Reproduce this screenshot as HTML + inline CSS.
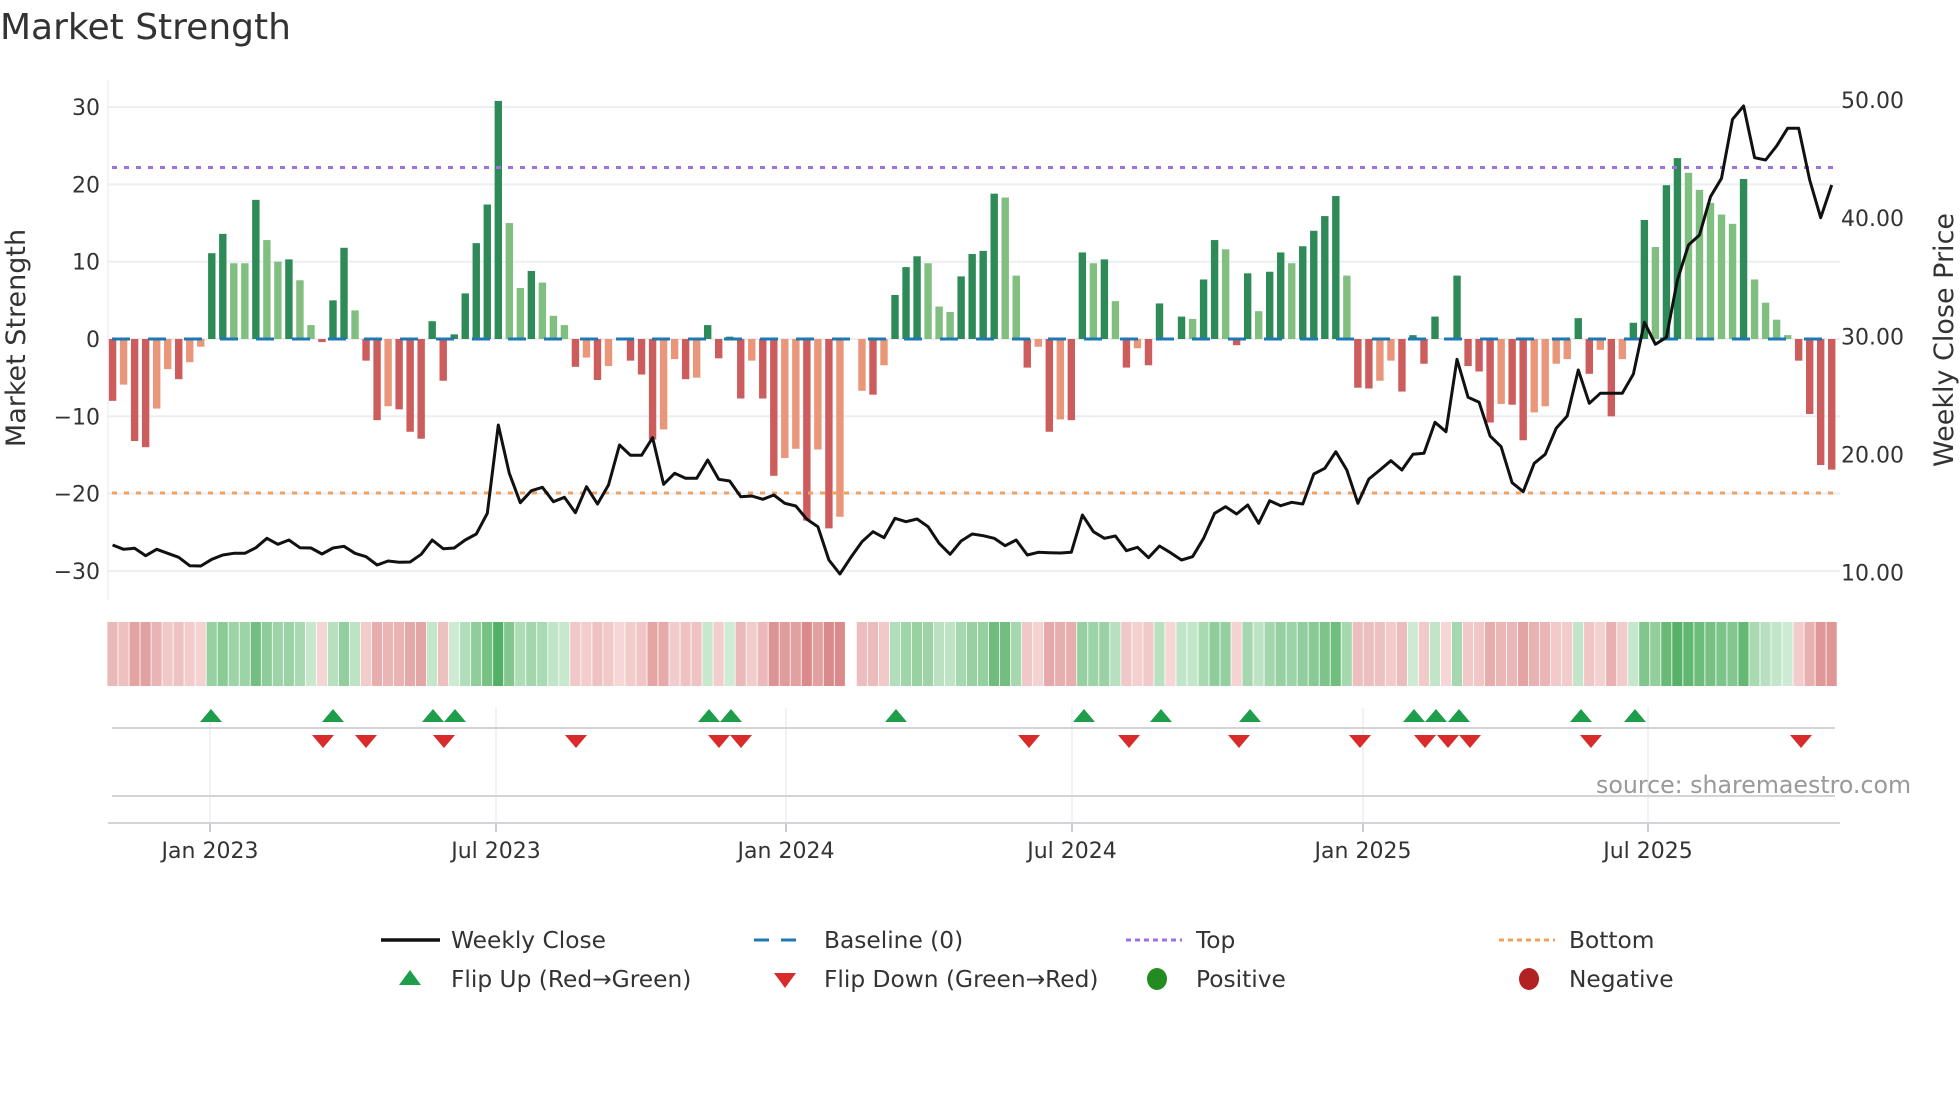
<!DOCTYPE html>
<html><head><meta charset="utf-8">
<style>
html,body{margin:0;padding:0;background:#fff;}
body{width:1960px;height:1102px;overflow:hidden;font-family:"DejaVu Sans","Liberation Sans",sans-serif;}
svg{display:block}
text{font-family:"DejaVu Sans","Liberation Sans",sans-serif;}
</style></head>
<body>
<svg id="s" width="1960" height="1102" viewBox="0 0 1960 1102" xmlns="http://www.w3.org/2000/svg">
<rect width="1960" height="1102" fill="#fff"/>
<text x="0" y="39" font-size="36" fill="#333">Market Strength</text>
<g id="grid"></g>
<g id="heat"></g>
<g id="bars"></g>
<g id="fl"></g>
<text x="1596" y="793" font-size="23.7" fill="#999">source: sharemaestro.com</text>
<text transform="translate(25,338) rotate(-90)" text-anchor="middle" font-size="27" fill="#333">Market Strength</text>
<text transform="translate(1953,340) rotate(-90)" text-anchor="middle" font-size="27" fill="#333">Weekly Close Price</text>
<g font-size="23.3" fill="#333">
<line x1="381" y1="940" x2="440" y2="940" stroke="#111" stroke-width="3.5"/>
<text x="451" y="948">Weekly Close</text>
<line x1="754" y1="940" x2="806" y2="940" stroke="#1f77b4" stroke-width="3" stroke-dasharray="15,12"/>
<text x="824" y="948">Baseline (0)</text>
<line x1="1126" y1="940" x2="1182" y2="940" stroke="#a070e0" stroke-width="3" stroke-dasharray="5,4"/>
<text x="1196" y="948">Top</text>
<line x1="1499" y1="940" x2="1555" y2="940" stroke="#f0a060" stroke-width="3" stroke-dasharray="5,4"/>
<text x="1569" y="948">Bottom</text>
<polygon points="410,970 399,985 421,985" fill="#1e9e4a"/>
<text x="451" y="987">Flip Up (Red→Green)</text>
<polygon points="774,973 796,973 785,988" fill="#d92b2b"/>
<text x="824" y="987">Flip Down (Green→Red)</text>
<ellipse cx="1157" cy="979" rx="10" ry="11" fill="#228b22"/>
<text x="1196" y="987">Positive</text>
<ellipse cx="1529" cy="979" rx="10" ry="11" fill="#b22222"/>
<text x="1569" y="987">Negative</text>
</g>
</svg>
<script>
var NS="http://www.w3.org/2000/svg";
function el(p,t,a,txt){var e=document.createElementNS(NS,t);for(var k in a)e.setAttribute(k,a[k]);if(txt!=null)e.textContent=txt;p.appendChild(e);return e;}
var V="-8d -5.9l -13.2d -14d -9l -3.9l -5.2d -3l -1l 11.1d 13.6d 9.8l 9.8l 18d 12.8l 10l 10.3d 7.6l 1.8l -0.4d 5d 11.8d 3.7l -2.8d -10.5d -8.7l -9.1d -12d -12.9d 2.3d -5.4d 0.6d 5.9d 12.4d 17.4d 30.8d 15l 6.6l 8.8d 7.3l 3l 1.8l -3.6d -2.4l -5.3d -3.5l 0d -2.8d -4.6d -13d -11.7l -2.6l -5.2d -5l "+
"1.8d -2.5d 0.3d -7.7d -2.8l -7.7d -17.7d -15.4l -14.2l -23.5d -14.3l -24.5d -23l 0d -6.7l -7.2d -3.4l 5.7d 9.3d 10.7d 9.8l 4.2l 3.5l 8.1d 11d 11.4d 18.8d 18.3l 8.2l -3.7d -1l -12d -10.4l -10.5d 11.2d 9.8l 10.3d 4.9l -3.7d -1.2l -3.4d 4.6d 0d 2.9d 2.6l 7.7d 12.8d 11.6l -0.8d 8.5d "+
"3.6l 8.7d 11.2d 9.8l 12d 14d 15.9d 18.5d 8.2l -6.3d -6.4d -5.4l -2.8l -6.8d 0.5d -3.2d 2.9d 0d 8.2d -3.5d -4.2d -10.8d -8.4l -8.5d -13.1d -9.5l -8.7l -3.2l -2.6l 2.7d -4.5d -1.4l -10d -2.6l 2.1d 15.4d 11.9l 19.9d 23.4d 21.5l 19.3l 17.6l 16.1l 14.9l 20.7d 7.7l 4.7l 2.5l 0.5l -2.8d -9.7d -16.3d -16.9d";
var P=[1395,1408,1405,1427,1408,1420,1432,1457,1458,1438,1425,1420,1420,1403,1375,1393,1380,1403,1404,1422,1404,1399,1420,1430,1455,1443,1447,1446,1423,1380,1406,1404,1380,1362,1300,1035,1180,1268,1232,1222,1265,1252,1298,1220,1272,1215,1095,1126,1126,1073,1213,1180,1195,1195,
1140,1198,1203,1250,1248,1258,1245,1270,1278,1318,1340,1440,1482,1432,1385,1355,1373,1315,1325,1317,1340,1390,1423,1383,1362,1367,1375,1397,1380,1425,1417,1418,1419,1417,1305,1355,1375,1368,1412,1402,1433,1398,1418,1440,1430,1375,1300,1280,1302,1275,
1330,1262,1277,1267,1272,1182,1165,1115,1170,1270,1197,1170,1142,1170,1123,1120,1027,1055,838,952,967,1068,1100,1208,1235,1150,1123,1045,1008,870,970,940,940,940,882,727,793,772,600,495,465,350,295,118,78,233,240,198,145,145,300,413,315];
var vals=V.split(" ").map(function(s){return {v:parseFloat(s),d:s.slice(-1)=="d"};});
var X0=112.6,PX=11.02,Z=339,U=7.73;
var g=document.getElementById("grid"),b=document.getElementById("bars"),h=document.getElementById("heat"),f=document.getElementById("fl");
el(g,"line",{x1:108,y1:80,x2:108,y2:600,stroke:"#eef0f3","stroke-width":1.5});
[30,20,10,0,-10,-20,-30].forEach(function(t){var y=Z-t*U;el(g,"line",{x1:108,y1:y,x2:1840,y2:y,stroke:"#eceef2","stroke-width":2});
el(g,"text",{x:100,y:y+8,"text-anchor":"end","font-size":22,fill:"#333"},(t<0?"\u2212":"")+Math.abs(t));});
[[50,100],[40,218],[30,336.5],[20,454.5],[10,572.5]].forEach(function(a){el(g,"text",{x:1841,y:a[1]+8,"font-size":22,fill:"#333"},a[0].toFixed(2));});
var M=[[210,"Jan 2023"],[496,"Jul 2023"],[786,"Jan 2024"],[1072,"Jul 2024"],[1363,"Jan 2025"],[1648,"Jul 2025"]];
M.forEach(function(m){el(g,"line",{x1:m[0],y1:708,x2:m[0],y2:823,stroke:"#eceef3","stroke-width":1.5});
el(g,"line",{x1:m[0],y1:823,x2:m[0],y2:832,stroke:"#bbb","stroke-width":1.5});
el(g,"text",{x:m[0],y:858,"text-anchor":"middle","font-size":22,fill:"#333"},m[1]);});
el(g,"line",{x1:112,y1:728,x2:1835,y2:728,stroke:"#d4d4d8","stroke-width":2});
el(g,"line",{x1:112,y1:796,x2:1835,y2:796,stroke:"#d4d4d8","stroke-width":2});
el(g,"line",{x1:108,y1:823,x2:1840,y2:823,stroke:"#d4d4d8","stroke-width":2});
function mix(a,c,t){return "rgb("+[0,1,2].map(function(i){return Math.round(a[i]+(c[i]-a[i])*t);}).join(",")+")";}
vals.forEach(function(o,i){
 var x=X0+i*PX,v=o.v;
 if(v!==0){var y=Z-v*U;var col=v>0?(o.d?"#2e8b57":"#80bf80"):(o.d?"#cd5c5c":"#e9967a");
  el(b,"rect",{x:x-3.7,y:Math.min(y,Z),width:7.4,height:Math.max(Math.abs(v*U),1.5),fill:col});}
 if(i!==67){var t,c;
  if(v>0){t=Math.min(v/24,1);c=mix([208,236,214],[84,176,100],t);}
  else{t=Math.min(-v/20,1);c=mix([246,214,214],[218,138,138],t);}
  el(h,"rect",{x:x-5.2,y:622,width:10.2,height:64,fill:c});}
});
el(b,"line",{x1:112,y1:Z,x2:1840,y2:Z,stroke:"#1f77b4","stroke-width":3,"stroke-dasharray":"18,18"});
el(b,"line",{x1:112,y1:167.5,x2:1840,y2:167.5,stroke:"#a070e0","stroke-width":3,"stroke-dasharray":"5,7"});
el(b,"line",{x1:112,y1:493,x2:1840,y2:493,stroke:"#f0a060","stroke-width":3,"stroke-dasharray":"5,7"});
var pts=P.map(function(zy,i){return (X0+i*PX).toFixed(1)+","+(80+zy/3).toFixed(1);}).join(" ");
el(b,"polyline",{points:pts,fill:"none",stroke:"#111","stroke-width":3,"stroke-linejoin":"round"});
[211,333,433,455,709,731,896,1084,1161,1250,1414,1436,1459,1581,1635].forEach(function(x){el(f,"polygon",{points:(x)+",709 "+(x-11)+",722 "+(x+11)+",722",fill:"#1e9e4a"});});
[323,366,444,576,719,741,1029,1129,1239,1360,1425,1448,1470,1591,1801].forEach(function(x){el(f,"polygon",{points:(x-11)+",735 "+(x+11)+",735 "+x+",748",fill:"#d92b2b"});});
</script>
</body></html>
